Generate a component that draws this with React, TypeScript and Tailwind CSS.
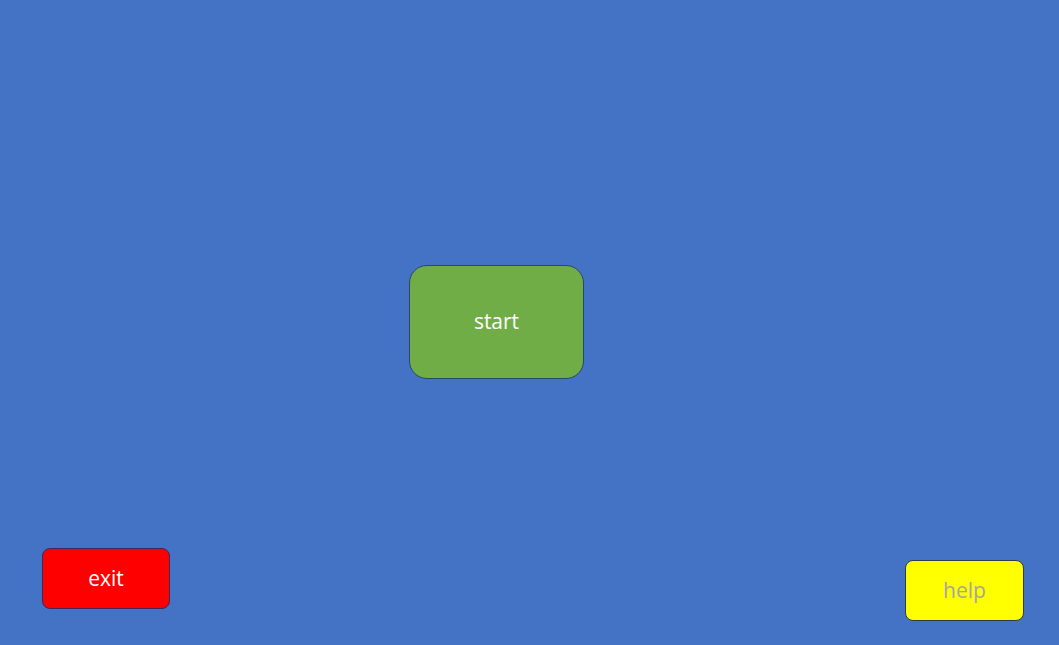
import React from 'react';

export default function App() {
  return (
    <div className="w-[1059px] h-[645px] bg-[#4472c4] overflow-hidden flex flex-col" style={{ fontFamily: '"Open Sans", "Noto Sans", sans-serif' }}>
      {/* Start */}
      <div className="mt-[265px] ml-[409px]">
        <button className="w-[175px] h-[114px] rounded-[18px] bg-[#70ad47] border border-[#25486b] text-white text-[21px] flex items-center justify-center">
          start
        </button>
      </div>

      {/* Bottom row */}
      <div className="mt-[169px] flex items-start justify-between pl-[42px] pr-[35px]">
        <button className="w-[128px] h-[61px] rounded-[8px] bg-[#ff0000] border border-[#3a2a5e] text-white text-[21px] flex items-center justify-center">
          exit
        </button>
        <button className="mt-[12px] w-[119px] h-[61px] rounded-[8px] bg-[#ffff00] border border-[#2f3a4a] text-[#a5a5a5] text-[21px] flex items-center justify-center">
          help
        </button>
      </div>
    </div>
  );
}
